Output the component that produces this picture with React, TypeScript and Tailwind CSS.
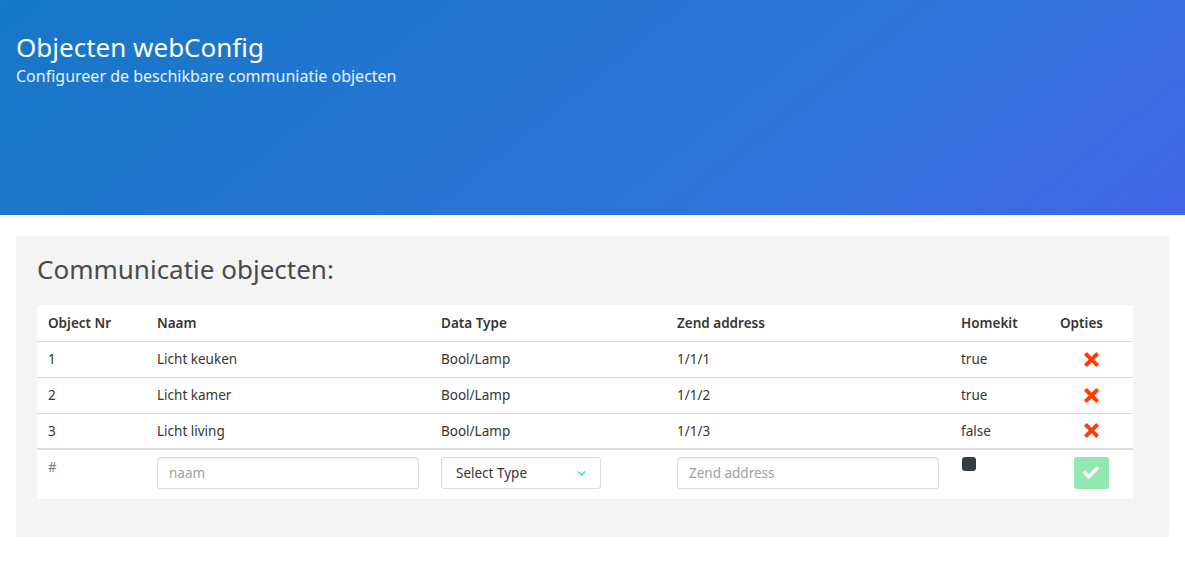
import { Check, ChevronDown, X } from "lucide-react";

const objects = [
  { nr: 1, naam: "Licht keuken", type: "Bool/Lamp", address: "1/1/1", homekit: "true" },
  { nr: 2, naam: "Licht kamer", type: "Bool/Lamp", address: "1/1/2", homekit: "true" },
  { nr: 3, naam: "Licht living", type: "Bool/Lamp", address: "1/1/3", homekit: "false" },
];

export default function App() {
  return (
    <div className="min-h-[588px] bg-white font-['Noto_Sans',sans-serif] text-[#363636]">
      {/* Hero */}
      <section className="h-[215px] bg-[linear-gradient(141deg,#1577c6_0%,#3273dc_71%,#4366e5_100%)] px-4 pt-[29px] text-white">
        <h1 className="text-[26px] leading-[36px]">Objecten webConfig</h1>
        <p className="text-[16px] leading-[22px] text-white/90">Configureer de beschikbare communiatie objecten</p>
      </section>

      {/* Card */}
      <div className="px-4 pt-[21px]">
        <div className="rounded-[3px] bg-[#f4f4f4] pl-[21px] pr-[35px] pt-[16px] pb-[38px]">
          <h2 className="mb-[19px] text-[26px] leading-[34px] text-[#4a4a4a]">Communicatie objecten:</h2>

          <table className="w-[1096px] table-fixed border-collapse bg-white text-[13.5px]">
            <colgroup>
              <col className="w-[109px]" />
              <col className="w-[284px]" />
              <col className="w-[236px]" />
              <col className="w-[284px]" />
              <col className="w-[99px]" />
              <col className="w-[84px]" />
            </colgroup>
            <thead>
              <tr className="h-[36px] border-b border-[#dbdbdb] text-left text-[#363636]">
                <th className="px-[11px] font-semibold">Object Nr</th>
                <th className="px-[11px] font-semibold">Naam</th>
                <th className="px-[11px] font-semibold">Data Type</th>
                <th className="px-[11px] font-semibold">Zend address</th>
                <th className="px-[11px] font-semibold">Homekit</th>
                <th className="px-[11px] font-semibold">Opties</th>
              </tr>
            </thead>
            <tbody>
              {objects.map((o, i) => (
                <tr
                  key={o.nr}
                  className={`h-[36px] ${i === objects.length - 1 ? "border-b-2" : "border-b"} border-[#dbdbdb]`}
                >
                  <td className="px-[11px]">{o.nr}</td>
                  <td className="px-[11px]">{o.naam}</td>
                  <td className="px-[11px]">{o.type}</td>
                  <td className="px-[11px]">{o.address}</td>
                  <td className="px-[11px]">{o.homekit}</td>
                  <td className="px-[11px]">
                    <div className="flex justify-center">
                      <X className="h-[19px] w-[19px] text-[#ff3d0a]" strokeWidth={5} strokeLinecap="square" />
                    </div>
                  </td>
                </tr>
              ))}
              <tr className="h-[50px] align-top">
                <td className="px-[11px] pt-[7px] text-[#7a7a7a]">#</td>
                <td className="px-[11px] pt-[7px]">
                  <input
                    placeholder="naam"
                    className="h-[32px] w-full rounded-[3px] border border-[#dbdbdb] px-[11px] text-[13.5px] shadow-[inset_0_1px_2px_rgba(10,10,10,0.1)] placeholder:text-[#a0a0a0]"
                  />
                </td>
                <td className="px-[11px] pt-[7px]">
                  <div className="flex h-[32px] w-[160px] items-center justify-between rounded-[3px] border border-[#dbdbdb] pl-[14px] pr-[12px]">
                    <span>Select Type</span>
                    <ChevronDown className="h-[13px] w-[13px] text-[#00d1b2]" strokeWidth={2} />
                  </div>
                </td>
                <td className="px-[11px] pt-[7px]">
                  <input
                    placeholder="Zend address"
                    className="h-[32px] w-full rounded-[3px] border border-[#dbdbdb] px-[11px] text-[13.5px] shadow-[inset_0_1px_2px_rgba(10,10,10,0.1)] placeholder:text-[#a0a0a0]"
                  />
                </td>
                <td className="px-[11px] pt-[7px]">
                  <div className="ml-[1px] h-[14px] w-[14px] rounded-[3px] bg-[#363b46]" />
                </td>
                <td className="px-[11px] pt-[7px]">
                  <div className="flex justify-center">
                    <button className="flex h-[32px] w-[35px] items-center justify-center rounded-[3px] bg-[#91e8b0]">
                      <Check className="h-[18px] w-[18px] text-white" strokeWidth={5} />
                    </button>
                  </div>
                </td>
              </tr>
            </tbody>
          </table>
        </div>
      </div>
    </div>
  );
}
